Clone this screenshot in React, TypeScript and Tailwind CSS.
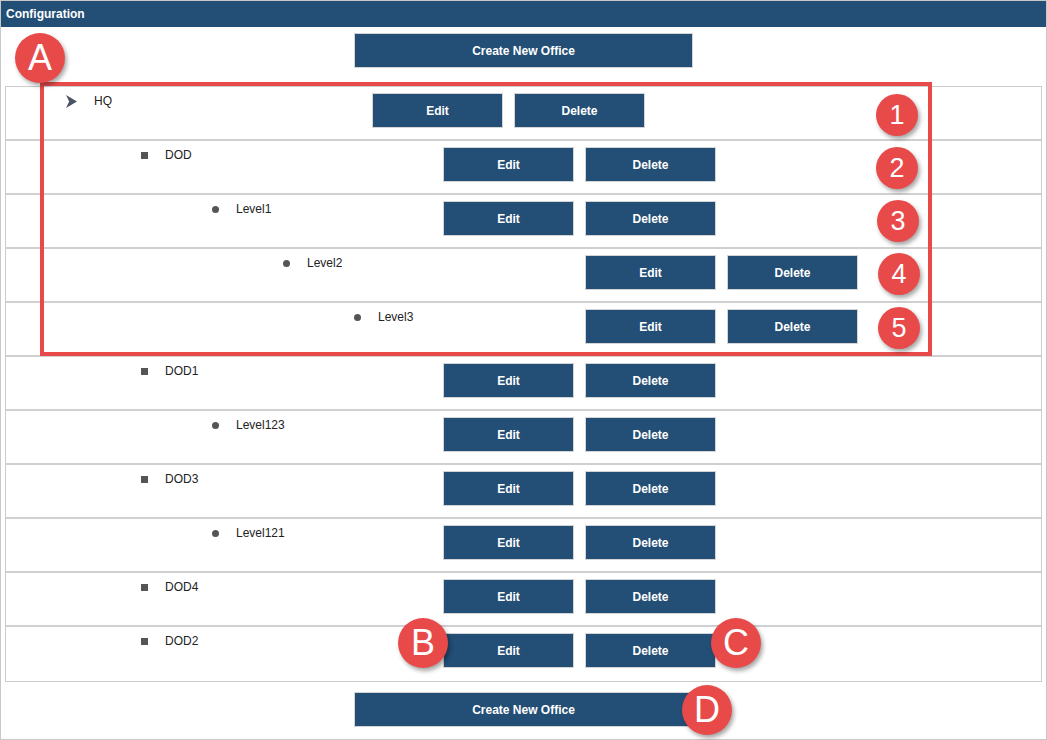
import React from "react";

type Marker = "arrow" | "square" | "dot";

interface OfficeRow {
  name: string;
  marker: Marker;
  indent: number; // left padding before the marker
  buttonsAt: number; // left edge of the Edit button
}

const rows: OfficeRow[] = [
  { name: "HQ", marker: "arrow", indent: 60, buttonsAt: 366 },
  { name: "DOD", marker: "square", indent: 135, buttonsAt: 437 },
  { name: "Level1", marker: "dot", indent: 206, buttonsAt: 437 },
  { name: "Level2", marker: "dot", indent: 277, buttonsAt: 579 },
  { name: "Level3", marker: "dot", indent: 348, buttonsAt: 579 },
  { name: "DOD1", marker: "square", indent: 135, buttonsAt: 437 },
  { name: "Level123", marker: "dot", indent: 206, buttonsAt: 437 },
  { name: "DOD3", marker: "square", indent: 135, buttonsAt: 437 },
  { name: "Level121", marker: "dot", indent: 206, buttonsAt: 437 },
  { name: "DOD4", marker: "square", indent: 135, buttonsAt: 437 },
  { name: "DOD2", marker: "square", indent: 135, buttonsAt: 437 },
];

function Bullet({ kind }: { kind: Marker }) {
  if (kind === "arrow") {
    return (
      <svg width="11" height="13" viewBox="0 0 11 13" className="shrink-0">
        <path d="M0 0 L11 6.5 L0 13 L3.2 6.5 Z" fill="#4b5466" />
      </svg>
    );
  }
  if (kind === "square") {
    return <span className="w-[7px] h-[7px] bg-[#555] shrink-0" />;
  }
  return <span className="w-[7px] h-[7px] rounded-full bg-[#555] shrink-0" />;
}

function ActionButton({ label, className = "" }: { label: string; className?: string }) {
  return (
    <button
      className={`h-[35px] bg-[#234e75] border border-[#d4d4d4] text-white text-[12px] font-bold ${className}`}
    >
      {label}
    </button>
  );
}

function Badge({ label, className }: { label: string; className: string }) {
  return (
    <div
      className={`absolute rounded-full bg-[#e84a4a] text-white flex items-center justify-center shadow-[2px_3px_4px_rgba(0,0,0,0.35)] ${className}`}
    >
      {label}
    </div>
  );
}

export default function App() {
  return (
    <div className="relative w-[1047px] h-[740px] border border-[#c8c8c8] bg-white font-['Liberation_Sans',Arial,sans-serif] text-[#222]">
      <div className="h-[26px] bg-[#234e75] text-white text-[12px] font-bold leading-[26px] pl-[5px]">
        Configuration
      </div>

      <div className="flex justify-center pt-[6px] pb-[18px]">
        <ActionButton label="Create New Office" className="w-[339px]" />
      </div>

      <div className="mx-[4px] border border-[#cccccc]">
        {rows.map((row, i) => (
          <div
            key={row.name}
            className={`flex items-start h-[54px] pt-[6px] ${
              i < rows.length - 1 ? "border-b-2 border-[#d0d0d0]" : ""
            }`}
          >
            <div
              className="flex items-center gap-[17px] shrink-0 leading-[16px] text-[12px]"
              style={{ width: row.buttonsAt, paddingLeft: row.indent }}
            >
              <Bullet kind={row.marker} />
              <span>{row.name}</span>
            </div>
            <div className="flex gap-[11px]">
              <ActionButton label="Edit" className="w-[131px]" />
              <ActionButton label="Delete" className="w-[131px]" />
            </div>
          </div>
        ))}
      </div>

      <div className="flex justify-center pt-[10px]">
        <ActionButton label="Create New Office" className="w-[339px]" />
      </div>

      {/* callout frame and markers */}
      <div className="absolute left-[39px] top-[81px] w-[892px] h-[274px] border-4 border-[#e84a4a]" />

      <Badge label="A" className="left-[14px] top-[32px] w-[50px] h-[50px] text-[36px]" />
      <Badge label="1" className="left-[875px] top-[93px] w-[42px] h-[42px] text-[27px]" />
      <Badge label="2" className="left-[875px] top-[146px] w-[42px] h-[42px] text-[27px]" />
      <Badge label="3" className="left-[876px] top-[199px] w-[42px] h-[42px] text-[27px]" />
      <Badge label="4" className="left-[877px] top-[252px] w-[42px] h-[42px] text-[27px]" />
      <Badge label="5" className="left-[877px] top-[306px] w-[42px] h-[42px] text-[27px]" />
      <Badge label="B" className="left-[397px] top-[617px] w-[50px] h-[50px] text-[36px]" />
      <Badge label="C" className="left-[710px] top-[617px] w-[50px] h-[50px] text-[36px]" />
      <Badge label="D" className="left-[681px] top-[684px] w-[50px] h-[50px] text-[36px]" />
    </div>
  );
}
